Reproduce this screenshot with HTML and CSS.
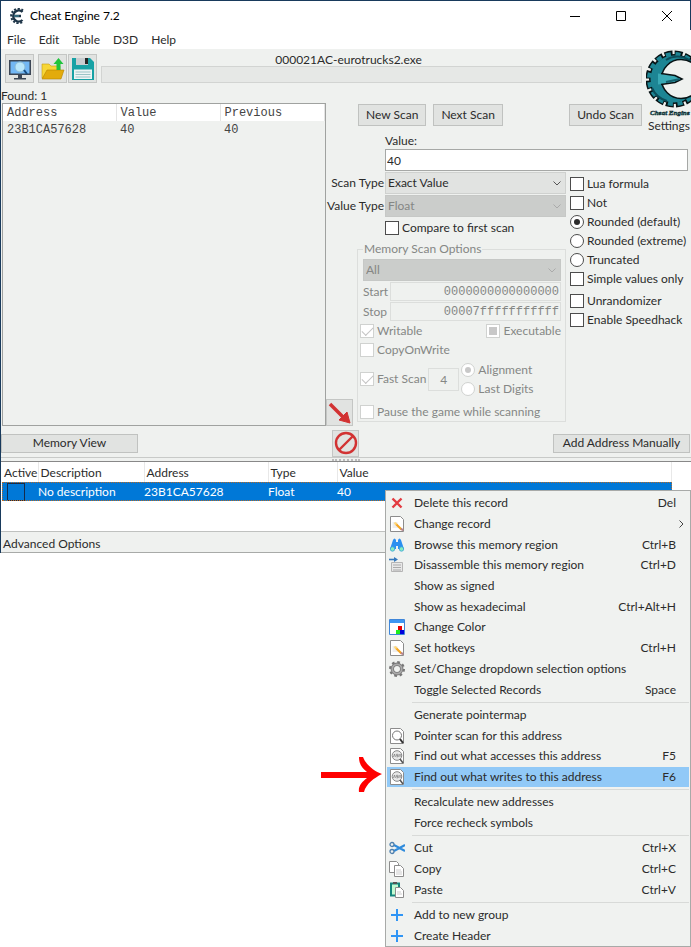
FILE: index.html
```html
<!DOCTYPE html>
<html lang="en">
<head>
<meta charset="utf-8">
<title>Cheat Engine 7.2</title>
<link rel="stylesheet" href="styles.css">
</head>
<body>
<svg class="defs" aria-hidden="true">
  <symbol id="edit" viewBox="0 0 16 16"><path d="M1.5.5h10l3 3v12h-13z" fill="#fff" stroke="#8c8c8c"/><path d="M3.5 7h5M3.5 9h5M3.5 11h7" stroke="#ddd"/><path d="M6.500 7.500l6 6" stroke="#f5a623" stroke-width="2.200"/><path d="M12 12.500l2 2" stroke="#b9838c" stroke-width="2"/><path d="M5.500 6.500l2 2" stroke="#ffd879" stroke-width="2"/></symbol>
  <symbol id="pagefind" viewBox="0 0 16 16"><path d="M1.5.5h10l3 3v12h-13z" fill="#fff" stroke="#8c8c8c"/><circle cx="8" cy="7.500" r="4.500" fill="#fff" stroke="#777"/><path d="M11 11l3 4" stroke="#333" stroke-width="2"/></symbol>
  <symbol id="asmfind" viewBox="0 0 16 16"><path d="M1.5.5h10l3 3v12h-13z" fill="#fff" stroke="#8c8c8c"/><circle cx="8" cy="7.500" r="4.800" fill="#e8e8e8" stroke="#888"/><path d="M4.500 9l1-3 1 3M9 6.300H7.500v1.200H9v1.300H7.500M10 9V6.300l1 1 1-1V9" fill="none" stroke="#777" stroke-width=".7"/><path d="M11 11l3 4" stroke="#555" stroke-width="1.600"/></symbol>
  <symbol id="plus" viewBox="0 0 16 16"><path d="M8 2v12M2 8h12" stroke="#2f95f5" stroke-width="2"/></symbol>
  <symbol id="chev" viewBox="0 0 10 10"><path d="M1.500 3.500L5 7l3.500-3.500" fill="none" stroke="currentColor"/></symbol>
</svg>
<main class="window">
  <header class="titlebar">
    <svg class="appicon" viewBox="0 0 16 16"><path d="M13.500 4A5.500 5.500 0 1 0 13.500 12M4 8h8" fill="none" stroke="#1d3447" stroke-width="2.400"/><path d="M14 2.500A7.200 7.200 0 1 0 14 13.500" fill="none" stroke="#1d3447" stroke-width="2" stroke-dasharray="2 1.600"/><path d="M5 8h5" stroke="#4a9cb0"/></svg>
    <h1>Cheat Engine 7.2</h1>
    <div class="winbuttons">
      <button aria-label="Minimize"><svg viewBox="0 0 12 12"><path d="M1 6.500h10" stroke="#000"/></svg></button>
      <button aria-label="Maximize"><svg viewBox="0 0 12 12"><path d="M1.500 1.500h9v9h-9z" fill="none" stroke="#000"/></svg></button>
      <button aria-label="Close"><svg viewBox="0 0 12 12"><path d="M1 1l10 10M11 1L1 11" stroke="#000"/></svg></button>
    </div>
  </header>
  <nav class="menubar"><button>File</button><button>Edit</button><button>Table</button><button>D3D</button><button>Help</button></nav>

  <section class="workspace">
    <div class="toolbar">
      <button class="tool process" aria-label="Open process"><svg viewBox="0 0 24 24"><path d="M1 3h22v15H1z" fill="#3b4655"/><path d="M2.500 4.500h19v12h-19z" fill="#72b7f5"/><path d="M10 18h4v3h4v1.500H6V21h4z" fill="#3b4655"/><circle cx="12" cy="10" r="5" fill="#b9e6fb" stroke="#8dbbd4"/><path d="M16 13l3 4" stroke="#174d80" stroke-width="2"/></svg></button>
      <button class="tool" aria-label="Open file"><svg viewBox="0 0 24 24"><path d="M1 21V7h7l2 2h9v4z" fill="#f7d637" stroke="#c59a12" stroke-width=".6"/><path d="M1 22l5-9h17l-3 9z" fill="#e3ab0b" stroke="#b58400" stroke-width=".6"/><path d="M17.500 1l5 6h-3v6h-4V7h-3z" fill="#20c43c"/></svg></button>
      <button class="tool" aria-label="Save"><svg viewBox="0 0 24 24"><path d="M1 1h18l4 4v18H1z" fill="#17a2a5"/><path d="M5 1h12v7H5z" fill="#c8cdd0"/><path d="M14 1h3v6h-3z" fill="#252525"/><path d="M3 12.500h18V22H3z" fill="#eef4f4"/><path d="M4.500 15h15M4.500 17.500h15M4.500 20h15" stroke="#9bc4c6"/></svg></button>
      <div class="progress"><span>000021AC-eurotrucks2.exe</span><div class="bar"></div></div>
    </div>
    <button class="logo"><svg viewBox="0 0 45 68">
      <circle cx="28" cy="29" r="25" fill="#071315"/>
      <circle cx="28" cy="29" r="26" fill="none" stroke="#071315" stroke-width="5" stroke-dasharray="8 2.200"/>
      <circle cx="28" cy="29" r="23.500" fill="#1d8594"/>
      <circle cx="28" cy="29" r="25" fill="none" stroke="#1d8594" stroke-width="4" stroke-dasharray="5 4.800" stroke-dashoffset="-1"/>
      <path d="M20 10c8-5 17-4 25 1M6 38c3 7 8 11 15 13" fill="none" stroke="#0c4d5a" stroke-width="2"/>
      <circle cx="35" cy="29" r="19.500" fill="#eff1ef" stroke="#071315" stroke-width="1.500"/>
      <path d="M12 23.500l17 2 7 3.500-7 3.500-17 2z" fill="#39a9b5"/>
      <path d="M15 23.500l14 2 7 3.500-7 3.500-14 2" fill="none" stroke="#071315" stroke-width="1.600"/>
      <path d="M20 32l14-3" stroke="#13606e" stroke-width="2"/>
      <text x="4" y="65" class="logotext">Cheat Engine</text></svg><span>Settings</span></button>

    <div class="results">
      <div class="found">Found: 1</div>
      <div class="list"><table>
        <thead><tr><th>Address</th><th>Value</th><th>Previous</th></tr></thead>
        <tbody><tr><td>23B1CA57628</td><td>40</td><td>40</td></tr></tbody>
      </table></div>
    </div>

    <div class="scanbuttons"><button class="btn">New Scan</button><button class="btn">Next Scan</button><button class="btn undo">Undo Scan</button></div>

    <div class="panel">
      <div class="valuebox"><label for="value">Value:</label><input id="value" type="text" value="40"></div>
      <div class="columns">
        <div class="form">
          <div class="field"><label for="scantype">Scan Type</label><div class="select"><select id="scantype"><option>Exact Value</option></select><svg><use href="#chev"/></svg></div></div>
          <div class="field"><label for="valuetype">Value Type</label><div class="select off"><select id="valuetype" disabled><option>Float</option></select><svg><use href="#chev"/></svg></div></div>
          <label class="check compare"><input type="checkbox">Compare to first scan</label>
          <div class="memory">
            <button class="tool arrow" aria-label="Move to address list"><svg viewBox="0 0 24 24"><path d="M2 3l14 14" stroke="#d23232" stroke-width="3.600"/><path d="M22 22l-3-11-8 8z" fill="#d23232" stroke="#d23232"/></svg></button>
            <fieldset disabled>
              <legend>Memory Scan Options</legend>
              <div class="select off"><select aria-label="Region"><option>All</option></select><svg><use href="#chev"/></svg></div>
              <div class="range"><label for="start">Start</label><input id="start" type="text" value="0000000000000000"></div>
              <div class="range"><label for="stop">Stop</label><input id="stop" type="text" value="00007fffffffffff"></div>
              <div class="pair"><label class="check"><input type="checkbox" checked>Writable</label><label class="check"><input class="mixed" type="checkbox">Executable</label></div>
              <label class="check"><input type="checkbox">CopyOnWrite</label>
              <div class="fast"><label class="check"><input type="checkbox" checked>Fast Scan</label><input class="align" type="text" value="4" aria-label="Alignment value"><div><label class="check"><input type="radio" name="align" checked>Alignment</label><label class="check"><input type="radio" name="align">Last Digits</label></div></div>
              <label class="check"><input type="checkbox">Pause the game while scanning</label>
            </fieldset>
          </div>
        </div>
        <div class="options">
          <label class="check"><input type="checkbox">Lua formula</label>
          <label class="check"><input type="checkbox">Not</label>
          <label class="check"><input type="radio" name="round" checked>Rounded (default)</label>
          <label class="check"><input type="radio" name="round">Rounded (extreme)</label>
          <label class="check"><input type="radio" name="round">Truncated</label>
          <label class="check"><input type="checkbox">Simple values only</label>
          <label class="check second"><input type="checkbox">Unrandomizer</label>
          <label class="check"><input type="checkbox">Enable Speedhack</label>
        </div>
      </div>
    </div>
  </section>

  <div class="actions">
    <button class="btn">Memory View</button>
    <button class="tool ban" aria-label="Clear list"><svg viewBox="0 0 24 24"><circle cx="12" cy="12" r="10" fill="none" stroke="#d23232" stroke-width="2.400"/><path d="M5 19L19 5" stroke="#d23232" stroke-width="2.400"/></svg></button>
    <button class="btn">Add Address Manually</button>
  </div>
  <div class="splitter"><i></i></div>
  <section class="records">
    <table>
      <thead><tr><th>Active</th><th>Description</th><th>Address</th><th>Type</th><th>Value</th></tr></thead>
      <tbody><tr><td><input type="checkbox" aria-label="Active"></td><td>No description</td><td>23B1CA57628</td><td>Float</td><td>40</td></tr></tbody>
    </table>
  </section>
  <footer class="status">Advanced Options</footer>
</main>

<svg class="pointer" viewBox="0 0 62 38"><path d="M0 16h46c-5-4-8-8-8-15h4c3 8 11 14 19 17-8 4-16 10-18 18h-5c-1-6 3-10 8-14H0z" fill="#f00"/></svg>

<ul class="context">
  <li><button><svg viewBox="0 0 16 16"><path d="M3.500 3.500l9 9M12.500 3.500l-9 9" stroke="#e33b41" stroke-width="2.400"/></svg><span>Delete this record</span><kbd>Del</kbd></button></li>
  <li><button><svg><use href="#edit"/></svg><span>Change record</span><b><svg><use href="#chev"/></svg></b></button></li>
  <li><button><svg viewBox="0 0 16 16"><path d="M4 3q1.500-3 3 0v2h2V3q1.500-3 3 0l3 9H9V9H7v3H1z" fill="#2b8ff0"/><circle cx="3.500" cy="12" r="2.200" fill="#85ecc0" stroke="#3aa3d8" stroke-width=".8"/><circle cx="12.500" cy="12" r="2.200" fill="#85ecc0" stroke="#3aa3d8" stroke-width=".8"/></svg><span>Browse this memory region</span><kbd>Ctrl+B</kbd></button></li>
  <li><button><svg viewBox="0 0 16 16"><path d="M2.500 5.500h11v9h-11z" fill="#e8e8e8" stroke="#b5b5b5"/><path d="M4 8h8M4 10.500h8M4 13h8" stroke="#aaa"/><path d="M0 2.500h7" stroke="#3679bd" stroke-width="1.600"/><path d="M5 0l4 2.500L5 5z" fill="#3679bd"/></svg><span>Disassemble this memory region</span><kbd>Ctrl+D</kbd></button></li>
  <li><button><i></i><span>Show as signed</span></button></li>
  <li><button><i></i><span>Show as hexadecimal</span><kbd>Ctrl+Alt+H</kbd></button></li>
  <li><button><svg viewBox="0 0 16 16"><path d="M.5.5h15v15H.5z" fill="#fff" stroke="#3f86d9"/><path d="M1 1h14v3H1z" fill="#3e97f2"/><path d="M9 7h4v4H9z" fill="#e80000"/><path d="M7 11h4v4H7z" fill="#1dee1d"/><path d="M11 11h4v4h-4z" fill="#00d"/></svg><span>Change Color</span></button></li>
  <li><button><svg><use href="#edit"/></svg><span>Set hotkeys</span><kbd>Ctrl+H</kbd></button></li>
  <li><button><svg viewBox="0 0 16 16"><circle cx="8" cy="8" r="7" fill="none" stroke="#777" stroke-width="2" stroke-dasharray="2.750 2.750"/><circle cx="8" cy="8" r="4.700" fill="none" stroke="#777" stroke-width="3.400"/><circle cx="8" cy="8" r="4.700" fill="none" stroke="#aaa" stroke-width="1.800"/></svg><span>Set/Change dropdown selection options</span></button></li>
  <li><button><i></i><span>Toggle Selected Records</span><kbd>Space</kbd></button></li>
  <li class="sep"></li>
  <li><button><i></i><span>Generate pointermap</span></button></li>
  <li><button><svg><use href="#pagefind"/></svg><span>Pointer scan for this address</span></button></li>
  <li><button><svg><use href="#asmfind"/></svg><span>Find out what accesses this address</span><kbd>F5</kbd></button></li>
  <li class="active"><button><svg><use href="#asmfind"/></svg><span>Find out what writes to this address</span><kbd>F6</kbd></button></li>
  <li class="sep"></li>
  <li><button><i></i><span>Recalculate new addresses</span></button></li>
  <li><button><i></i><span>Force recheck symbols</span></button></li>
  <li class="sep"></li>
  <li><button><svg viewBox="0 0 16 16"><path d="M5 5l11 6M5 11l11-6" stroke="#2f8bdc" stroke-width="2"/><circle cx="3" cy="4.500" r="2" fill="none" stroke="#4d7fae" stroke-width="1.300"/><circle cx="3" cy="11.500" r="2" fill="none" stroke="#4d7fae" stroke-width="1.300"/></svg><span>Cut</span><kbd>Ctrl+X</kbd></button></li>
  <li><button><svg viewBox="0 0 16 16"><path d="M.5.5h7l2 2v9h-9z" fill="#fff" stroke="#8c8c8c"/><path d="M5.500 4.500h6l3 3v8h-9z" fill="#fff" stroke="#8c8c8c"/><path d="M7 9h5M7 11h6M7 13h6" stroke="#ccc"/></svg><span>Copy</span><kbd>Ctrl+C</kbd></button></li>
  <li><button><svg viewBox="0 0 16 16"><path d="M2 1.500h8v12H2z" fill="#c2fbd2" stroke="#14857c" stroke-width="2"/><path d="M4 0h4v2H4z" fill="#555"/><path d="M6.500 5.500h5l3 3v7h-8z" fill="#fff" stroke="#8c8c8c"/><path d="M8 10h4M8 12h5" stroke="#ccc"/></svg><span>Paste</span><kbd>Ctrl+V</kbd></button></li>
  <li class="sep"></li>
  <li><button><svg><use href="#plus"/></svg><span>Add to new group</span></button></li>
  <li><button><svg><use href="#plus"/></svg><span>Create Header</span></button></li>
</ul>
</body>
</html>
```
FILE: styles.css
```css
* { box-sizing: border-box; }
body {
  margin: 0;
  min-height: 100vh;
  position: relative;
  background: #fff;
  color: #2b2b2b;
  font: 12px/16px Lato, "Open Sans", sans-serif;
}
button, input, select { font: inherit; color: inherit; margin: 0; padding: 0; border: 0; background: none; border-radius: 0; }
svg { display: block; flex: none; }
.defs { position: absolute; width: 0; height: 0; }

.window { border-top: 1px solid #183a5c; border-left: 1px solid #183a5c; }
.titlebar { display: flex; align-items: center; height: 29px; padding-left: 8px; border-right: 1px solid #183a5c; }
.titlebar h1 { margin: 0 0 0 5px; font-size: 12px; font-weight: 400; color: #000; }
.appicon { width: 16px; height: 16px; }
.winbuttons { display: flex; margin-left: auto; }
.winbuttons button { display: grid; place-items: center; width: 46px; height: 28px; }
.winbuttons svg { width: 12px; height: 12px; }
.menubar { display: flex; gap: 13px; height: 19px; padding: 2px 0 0 6px; align-items: flex-start; }

.workspace {
  display: grid;
  grid-template-columns: 325px 1fr 45px;
  grid-template-rows: 40px 44px auto;
  background: #eff1ef;
}
.toolbar { grid-column: 1 / 3; display: flex; align-items: flex-start; padding: 5px 4px 0; gap: 1px; }
.tool { display: grid; place-items: center; width: 29px; height: 29px; flex: none; background: #e1e3e1; border: 1px solid #c4c6c4; }
.tool svg { width: 24px; height: 24px; }
.process { margin-right: 3px; }
.progress { flex: 1; margin-left: 3px; text-align: center; }
.progress span { display: block; height: 12px; line-height: 12px; padding-right: 46px; }
.bar { height: 17px; background: #e6e8e6; border: 1px solid #d2d4d2; }
.logo { grid-column: 3; grid-row: 1 / 3; display: flex; flex-direction: column; justify-content: flex-start; align-items: flex-end; padding: 1px 1px 0 0; white-space: nowrap; }
.logo svg { width: 45px; height: 68px; margin-right: -1px; }
.logotext { font: italic bold 7px "Liberation Serif", serif; fill: #0e7683; stroke: #071315; stroke-width: .4; }

.results { grid-column: 1; grid-row: 2 / 4; display: flex; flex-direction: column; }
.found { height: 14px; line-height: 14px; }
.list { flex: 1; margin-left: 1px; border: 1px solid #a0a2a0; font-family: "Liberation Mono", monospace; color: #444; }
.list table { width: 100%; border-collapse: collapse; table-layout: fixed; }
.list th { height: 17px; padding: 0 0 0 4px; text-align: left; font-weight: 400; background: #fff; border-right: 1px solid #e4e4e4; }
.list th:nth-child(1) { width: 113px; }
.list th:nth-child(2) { width: 104px; }
.list td { height: 17px; padding: 0 0 0 4px; }

.scanbuttons { grid-column: 2; grid-row: 2; display: flex; align-items: flex-start; gap: 7px; padding: 15px 4px 0 32px; }
.btn { height: 22px; padding: 0 7px; background: #e1e3e1; border: 1px solid #c0c2c0; white-space: nowrap; }
.undo { margin-left: auto; }

.panel { grid-column: 2 / 4; grid-row: 3; display: flex; flex-direction: column; }
.valuebox { display: flex; flex-direction: column; padding: 0 3px 0 59px; margin-bottom: 1px; }
.valuebox input { width: 100%; height: 22px; padding-left: 1px; background: #fff; border: 1px solid #a6a8a6; }
.columns { display: flex; gap: 4px; }
.form { width: 240px; flex: none; }
.field { display: flex; align-items: center; margin-bottom: 1px; }
.field > label { width: 59px; padding-right: 1px; flex: none; display: flex; justify-content: flex-end; white-space: nowrap; }
.select { position: relative; flex: 1; color: #2b2b2b; }
.select select { display: block; appearance: none; width: 100%; height: 22px; padding-left: 2px; background: #e1e3e1; border: 1px solid #cfd1cf; opacity: 1; }
.select svg { position: absolute; right: 4px; top: 6px; width: 10px; height: 10px; color: #555; pointer-events: none; }
.off select { background: #cbcdcb; border-color: #c6c8c6; color: #858785; }
.off svg { color: #aaa; }
.check { display: flex; align-items: center; gap: 3px; height: 19px; white-space: nowrap; }
.check input { display: grid; place-items: center; appearance: none; width: 14px; height: 14px; flex: none; background: #fff; border: 1px solid #4c4c4c; }
.check input[type="radio"] { border-radius: 50%; }
.check input[type="radio"]:checked::before { content: ""; width: 6px; height: 6px; border-radius: 50%; background: #2b2b2b; }
.check input[type="checkbox"]:checked::before { content: ""; width: 10px; height: 5px; margin-bottom: 2px; border: solid #c4c4c4; border-width: 0 0 1px 1px; rotate: -45deg; }
.check .mixed::before { content: ""; width: 8px; height: 8px; background: #c8c8c8; }
.compare { margin: 0 0 4px 59px; }
.memory { display: flex; align-items: flex-end; justify-content: space-between; }
.arrow { width: 27px; height: 27px; }
fieldset { width: 209px; margin: 0 0 4px; padding: 2px 4px 0 5px; border: 1px solid #dcdedc; color: #858785; min-width: 0; }
legend { padding: 0 1px; line-height: 16px; }
fieldset .check input { border-color: #d0d2d0; }
fieldset .check input[type="radio"]:checked::before { background: #c8c8c8; }
fieldset .check { margin-left: -3px; }
.range { display: flex; align-items: center; justify-content: space-between; margin-top: 1px; }
.range input { width: 171px; height: 19px; padding-right: 1px; text-align: right; border: 1px solid #dcdedc; font-family: "Liberation Mono", monospace; }
.pair { display: flex; justify-content: space-between; }
.fast { display: flex; align-items: center; gap: 2px; margin: 1px 0 4px; }
.fast .align { width: 31px; height: 23px; text-align: center; border: 1px solid #dcdedc; }
.fast div .check { margin-left: 0; }
.options { padding-top: 2px; }
.second { margin-top: 3px; }

.actions { display: grid; grid-template-columns: 1fr auto 1fr; align-items: center; height: 31px; padding: 3px 1px 0 0; background: #eff1ef; }
.actions .btn { width: 137px; height: 19px; line-height: 16px; }
.actions .btn:last-child { justify-self: end; }
.ban { width: 27px; height: 27px; }
.splitter { height: 5px; display: grid; place-items: center; background: #eff1ef; border-top: 1px solid #c8cac8; border-bottom: 1px solid #888; }
.splitter i { width: 28px; border-top: 2px dotted #bbb; }

.records { min-height: 69px; padding-left: 1px; }
.records table { width: calc(100% - 19px); border-collapse: collapse; table-layout: fixed; }
.records th { height: 20px; padding: 2px 0 0 2px; text-align: left; font-weight: 400; border-right: 1px solid #e8e8e8; }
.records th:nth-child(1) { width: 36px; }
.records th:nth-child(2) { width: 106px; }
.records th:nth-child(3) { width: 124px; }
.records th:nth-child(4) { width: 69px; }
.records tbody tr { background: #0078d7; color: #fff; outline: 1px dotted #b86b26; outline-offset: -1px; }
.records td { height: 19px; padding: 0; }
.records input { display: block; appearance: none; width: 18px; height: 18px; margin-left: 5px; border: 1px solid #152c4b; }
.status { height: 22px; line-height: 24px; padding-left: 2px; background: #eff1ef; border-top: 1px solid #bfc1bf; border-bottom: 1px solid #a8aaa8; }

.pointer { position: absolute; left: 321px; top: 756px; width: 62px; height: 38px; }

.context {
  position: absolute;
  top: 490px;
  right: 0;
  bottom: 0;
  width: 306px;
  display: flex;
  flex-direction: column;
  margin: 0;
  padding: 2px 1px 0;
  list-style: none;
  background: #f0f2f0;
  border: 1px solid #a8aaa8;
}
.context li { flex: 62; min-height: 0; display: flex; }
.context .sep { flex: 14; align-items: center; }
.context .sep::before { content: ""; flex: 1; margin-left: 25px; border-top: 1px solid #d8dad8; }
.context .active { background: #91c9f7; }
.context button { flex: 1; display: flex; align-items: center; padding: 0 13px 0 2px; text-align: left; }
.context button > svg, .context button > i { width: 16px; height: 16px; flex: none; }
.context button > span { margin-left: 9px; flex: 1; white-space: nowrap; }
.context kbd { font: inherit; }
.context b { margin-right: -10px; rotate: -90deg; color: #444; }
.context b svg { width: 10px; height: 10px; }
```
